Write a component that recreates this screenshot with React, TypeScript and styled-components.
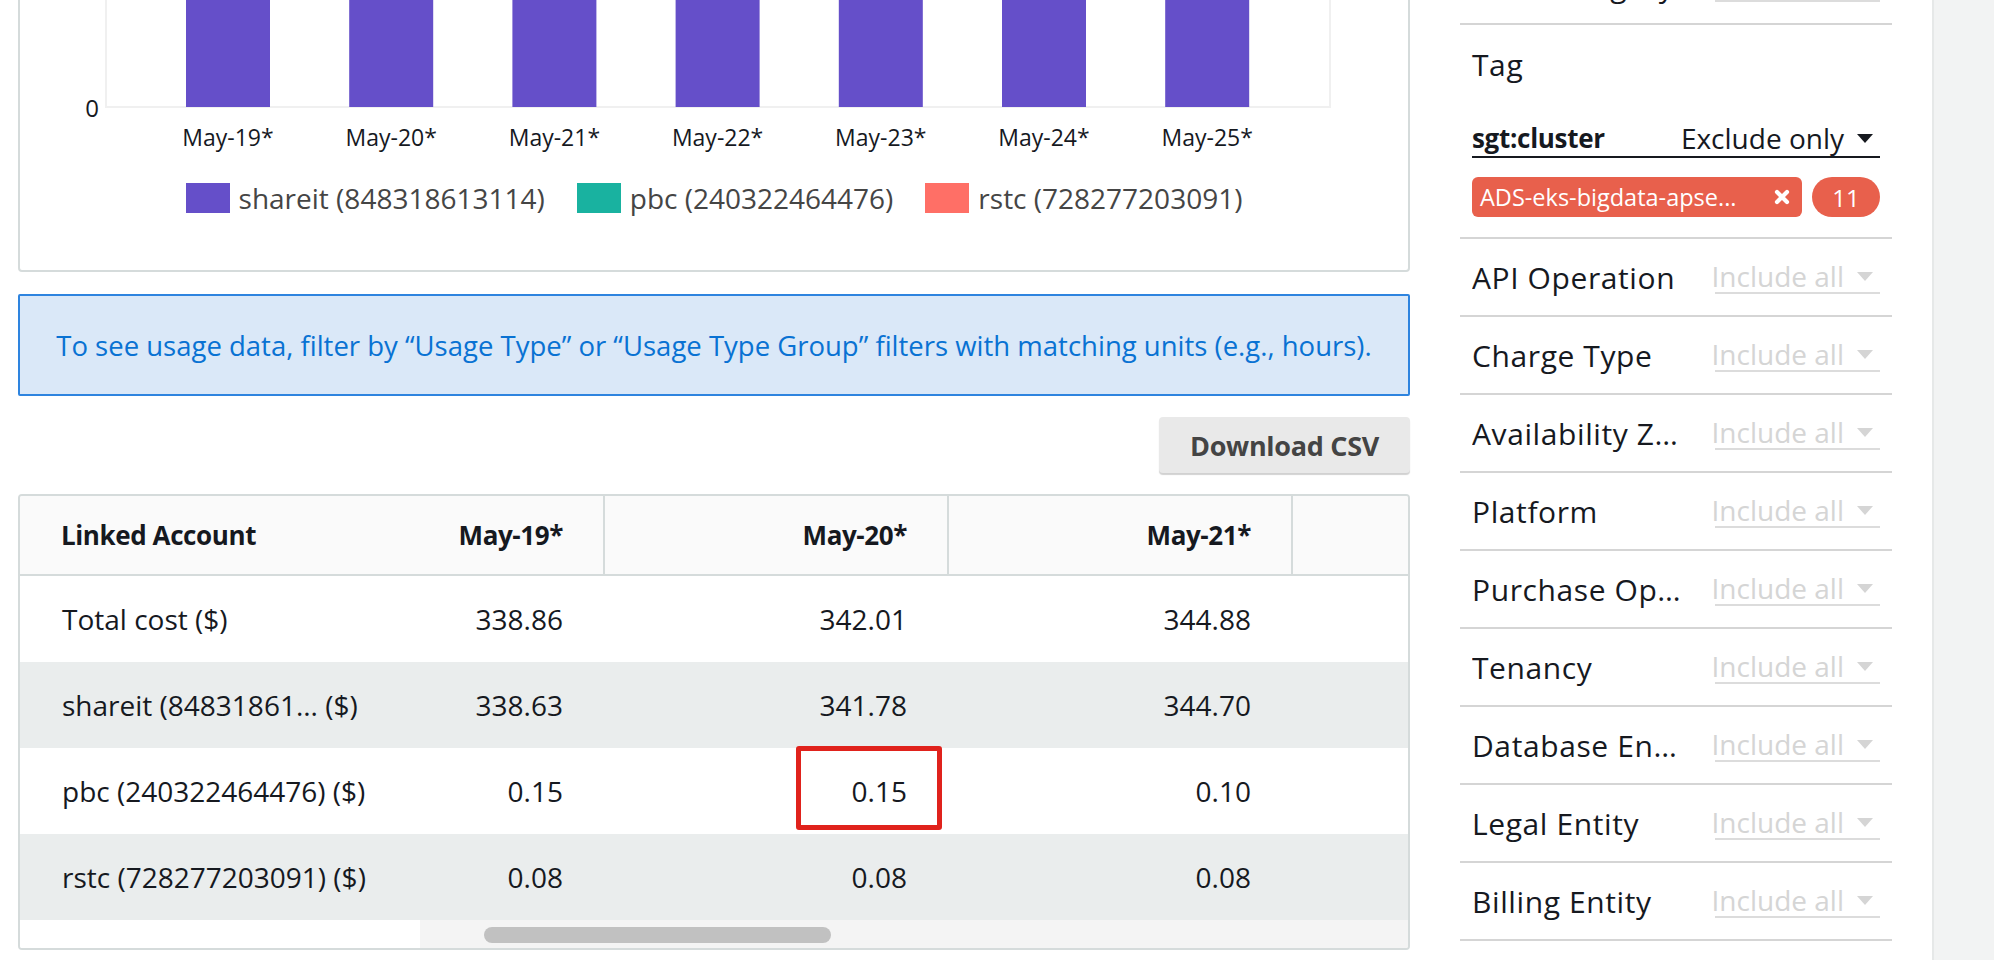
import React from "react";
import styled, { createGlobalStyle } from "styled-components";

const GlobalStyle = createGlobalStyle`
  html, body { margin: 0; padding: 0; background: #ffffff; overflow: hidden; }
  body { font-family: "Open Sans", "Noto Sans", Arial, sans-serif; color: #16191f; }
  * { box-sizing: border-box; }
`;

const Page = styled.div`
  display: flex;
  align-items: stretch;
  width: 1994px;
  height: 960px;
  overflow: hidden;
  padding-left: 18px;
`;

const Main = styled.main`
  flex: none;
  width: 1392px;
  margin-top: -322px;
  display: flex;
  flex-direction: column;
`;

/* ---------- chart ---------- */
const ChartPanel = styled.section`
  border: 2px solid #d5dbdb;
  border-radius: 4px;
  padding: 20px 0 57px;
  background: #fff;
`;

const ChartSvg = styled.svg`
  display: block;
  font-family: "Open Sans", "Noto Sans", Arial, sans-serif;
`;

const Legend = styled.div`
  margin-top: 23px;
  display: flex;
  justify-content: center;
  gap: 32px;
`;

const LegendItem = styled.div`
  display: flex;
  align-items: center;
  gap: 9px;
  font-size: 28px;
  line-height: 30px;
  color: #454545;
`;

const Swatch = styled.span<{ $color: string }>`
  width: 44px;
  height: 30px;
  background: ${(p) => p.$color};
  flex: none;
`;

/* ---------- info ---------- */
const InfoBox = styled.div`
  margin-top: 22px;
  height: 102px;
  border: 2px solid #2e84df;
  border-radius: 2px;
  background: #dae8f8;
  color: #0972d3;
  font-size: 27.5px;
  display: flex;
  align-items: center;
  justify-content: center;
  white-space: nowrap;
`;

const Actions = styled.div`
  margin-top: 21px;
  display: flex;
  justify-content: flex-end;
`;

const Button = styled.button`
  width: 251px;
  height: 56px;
  border: none;
  border-radius: 4px;
  background: #e9e9e9;
  box-shadow: 0 2px 1px rgba(0, 0, 0, 0.18);
  font-family: inherit;
  font-size: 27px;
  font-weight: 700;
  letter-spacing: -0.3px;
  color: #444;
  padding: 0;
`;

/* ---------- table ---------- */
const Table = styled.div`
  margin-top: 21px;
  border: 2px solid #d5dbdb;
  border-radius: 4px;
  overflow: hidden;
  background: #fff;
  display: flex;
  flex-direction: column;
`;

const TableBody = styled.div`
  display: flex;
`;

const LabelPane = styled.div`
  flex: none;
  width: 400px;
  display: flex;
  flex-direction: column;
`;

const DataPane = styled.div`
  flex: 1;
  min-width: 0;
  display: flex;
  flex-direction: column;
`;

const Row = styled.div`
  display: grid;
  grid-template-columns: 185px 344px 344px 1fr;
`;

const HeadCell = styled.div<{ $align?: "left" | "right"; $divider?: boolean }>`
  height: 80px;
  background: #fafafa;
  border-bottom: 2px solid #d5dbdb;
  border-right: ${(p) => (p.$divider ? "2px solid #d5dbdb" : "none")};
  display: flex;
  align-items: center;
  justify-content: ${(p) => (p.$align === "right" ? "flex-end" : "flex-start")};
  padding: ${(p) => (p.$align === "right" ? "0 40px 0 0" : "0 0 0 41px")};
  font-size: 26px;
  font-weight: 700;
  letter-spacing: -0.4px;
  color: #16191f;
  white-space: nowrap;
`;

const Cell = styled.div<{ $shaded: boolean; $align?: "left" | "right" }>`
  position: relative;
  height: 86px;
  background: ${(p) => (p.$shaded ? "#eaeded" : "#ffffff")};
  display: flex;
  align-items: center;
  justify-content: ${(p) => (p.$align === "right" ? "flex-end" : "flex-start")};
  padding: ${(p) => (p.$align === "right" ? "0 42px 0 0" : "0 0 0 42px")};
  font-size: 28px;
  color: #16191f;
  white-space: nowrap;
`;

const ScrollBar = styled.div`
  display: flex;
  height: 28px;
`;

const ScrollSpacer = styled.div`
  flex: none;
  width: 400px;
  background: #fff;
`;

const ScrollTrack = styled.div`
  flex: 1;
  background: #f4f4f4;
  padding: 7px 0 5px 64px;
`;

const ScrollThumb = styled.div`
  width: 347px;
  height: 16px;
  border-radius: 8px;
  background: #c1c1c1;
`;

const Highlight = styled.span`
  position: absolute;
  left: 191px;
  top: -2px;
  width: 146px;
  height: 84px;
  border: 5px solid #e0221c;
  border-radius: 3px;
  pointer-events: none;
`;

/* ---------- sidebar ---------- */
const Sidebar = styled.aside`
  flex: none;
  width: 432px;
  margin-left: 50px;
  margin-top: -53px;
  display: flex;
  flex-direction: column;
`;

const FilterRow = styled.div`
  height: 78px;
  border-bottom: 2px solid #d5d5d5;
  padding: 0 12px;
  display: flex;
  align-items: center;
  gap: 14px;
`;

const FilterLabel = styled.div`
  flex: 1;
  min-width: 0;
  font-size: 30px;
  letter-spacing: 0.6px;
  color: #16191f;
  white-space: nowrap;
  overflow: hidden;
`;

const Select = styled.div<{ $muted?: boolean }>`
  flex: none;
  width: ${(p) => (p.$muted ? "165px" : "auto")};
  height: 34px;
  display: flex;
  align-items: center;
  justify-content: flex-end;
  gap: 13px;
  padding-right: 7px;
  border-bottom: ${(p) => (p.$muted ? "2px solid #dcdcdc" : "none")};
  font-size: 28px;
  color: ${(p) => (p.$muted ? "#d5d5d5" : "#16191f")};
  white-space: nowrap;
`;

const Caret = styled.span<{ $muted?: boolean }>`
  width: 0;
  height: 0;
  border-left: 8px solid transparent;
  border-right: 8px solid transparent;
  border-top: 9px solid ${(p) => (p.$muted ? "#d5d5d5" : "#16191f")};
`;

const TagSection = styled.div`
  border-bottom: 2px solid #d5d5d5;
  padding: 20px 12px 20px;
  display: flex;
  flex-direction: column;
`;

const TagTitle = styled.div`
  font-size: 30px;
  line-height: 40px;
  letter-spacing: 0.6px;
`;

const KeyRow = styled.div`
  margin-top: 35px;
  height: 38px;
  border-bottom: 2px solid #16191f;
  display: flex;
  align-items: center;
  justify-content: space-between;
`;

const KeyName = styled.div`
  font-size: 26px;
  font-weight: 700;
  letter-spacing: -0.3px;
`;

const ChipRow = styled.div`
  margin-top: 19px;
  display: flex;
  gap: 10px;
`;

const Chip = styled.div`
  width: 330px;
  height: 40px;
  border-radius: 6px;
  background: #e8604c;
  color: #fff;
  font-size: 23.5px;
  display: flex;
  align-items: center;
  justify-content: space-between;
  padding: 0 12px 0 8px;
  white-space: nowrap;
`;

const CountPill = styled.div`
  width: 68px;
  height: 40px;
  border-radius: 20px;
  background: #e8604c;
  color: #fff;
  font-size: 24px;
  display: flex;
  align-items: center;
  justify-content: center;
`;

const Rail = styled.div`
  flex: 1;
  margin-left: 40px;
  background: #f2f3f3;
  border-left: 2px solid #e6e8e8;
`;

/* ---------- data ---------- */
const chartDates = ["May-19*", "May-20*", "May-21*", "May-22*", "May-23*", "May-24*", "May-25*"];
const tableDates = ["May-19*", "May-20*", "May-21*"];

const rows: { label: string; values: string[] }[] = [
  { label: "Total cost ($)", values: ["338.86", "342.01", "344.88"] },
  { label: "shareit (84831861... ($)", values: ["338.63", "341.78", "344.70"] },
  { label: "pbc (240322464476) ($)", values: ["0.15", "0.15", "0.10"] },
  { label: "rstc (728277203091) ($)", values: ["0.08", "0.08", "0.08"] },
];

const legend = [
  { name: "shareit (848318613114)", color: "#654fc9" },
  { name: "pbc (240322464476)", color: "#19b2a0" },
  { name: "rstc (728277203091)", color: "#ff6f66" },
];

const filters = [
  "API Operation",
  "Charge Type",
  "Availability Z…",
  "Platform",
  "Purchase Op…",
  "Tenancy",
  "Database En…",
  "Legal Entity",
  "Billing Entity",
];

function Chart() {
  const plotLeft = 86;
  const plotRight = 1310;
  const base = 407;
  const step = 163.2;
  return (
    <ChartSvg width={1388} height={460} viewBox="0 0 1388 460">
      <rect x={plotLeft} y={20} width={plotRight - plotLeft} height={base - 20} fill="none" stroke="#f0f0f0" strokeWidth={2} />
      {chartDates.map((d, i) => (
        <rect key={d} x={166 + i * step} y={47} width={84} height={base - 47} fill="#654fc9" />
      ))}
      <text x={79} y={base} fontSize={24} textAnchor="end" dominantBaseline="central" fill="#16191f">
        0
      </text>
      {chartDates.map((d, i) => (
        <text key={d} x={208 + i * step} y={437} fontSize={23} textAnchor="middle" dominantBaseline="central" fill="#16191f">
          {d}
        </text>
      ))}
    </ChartSvg>
  );
}

function CloseIcon() {
  return (
    <svg width="16" height="16" viewBox="0 0 16 16">
      <path d="M3 3 L13 13 M13 3 L3 13" stroke="#fff" strokeWidth="4.2" strokeLinecap="round" />
    </svg>
  );
}

function FilterSelect({ label }: { label: string }) {
  return (
    <FilterRow>
      <FilterLabel>{label}</FilterLabel>
      <Select $muted>
        Include all
        <Caret $muted />
      </Select>
    </FilterRow>
  );
}

export default function App() {
  return (
    <>
      <GlobalStyle />
      <Page>
        <Main>
          <ChartPanel>
            <Chart />
            <Legend>
              {legend.map((l) => (
                <LegendItem key={l.name}>
                  <Swatch $color={l.color} />
                  {l.name}
                </LegendItem>
              ))}
            </Legend>
          </ChartPanel>

          <InfoBox>
            To see usage data, filter by “Usage Type” or “Usage Type Group” filters with matching units (e.g., hours).
          </InfoBox>

          <Actions>
            <Button>Download CSV</Button>
          </Actions>

          <Table>
            <TableBody>
              <LabelPane>
                <HeadCell>Linked Account</HeadCell>
                {rows.map((r, i) => (
                  <Cell key={r.label} $shaded={i % 2 === 1}>
                    {r.label}
                  </Cell>
                ))}
              </LabelPane>
              <DataPane>
                <Row>
                  {tableDates.map((d) => (
                    <HeadCell key={d} $align="right" $divider>
                      {d}
                    </HeadCell>
                  ))}
                  <HeadCell $align="right" />
                </Row>
                {rows.map((r, ri) => (
                  <Row key={r.label}>
                    {r.values.map((v, ci) => (
                      <Cell key={ci} $shaded={ri % 2 === 1} $align="right">
                        {v}
                        {ri === 2 && ci === 1 && <Highlight />}
                      </Cell>
                    ))}
                    <Cell $shaded={ri % 2 === 1} $align="right" />
                  </Row>
                ))}
              </DataPane>
            </TableBody>
            <ScrollBar>
              <ScrollSpacer />
              <ScrollTrack>
                <ScrollThumb />
              </ScrollTrack>
            </ScrollBar>
          </Table>
        </Main>

        <Sidebar>
          <FilterSelect label="Cost Category" />
          <TagSection>
            <TagTitle>Tag</TagTitle>
            <KeyRow>
              <KeyName>sgt:cluster</KeyName>
              <Select>
                Exclude only
                <Caret />
              </Select>
            </KeyRow>
            <ChipRow>
              <Chip>
                ADS-eks-bigdata-apse...
                <CloseIcon />
              </Chip>
              <CountPill>11</CountPill>
            </ChipRow>
          </TagSection>
          {filters.map((f) => (
            <FilterSelect key={f} label={f} />
          ))}
        </Sidebar>

        <Rail />
      </Page>
    </>
  );
}
